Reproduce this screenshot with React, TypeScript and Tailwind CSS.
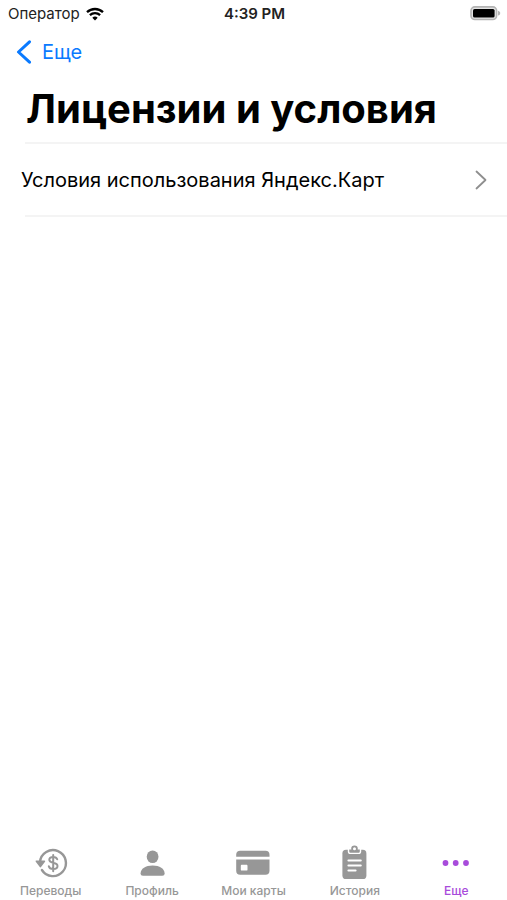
import React from 'react';

const TransfersIcon = () => (
  <svg viewBox="0 0 36 36" className="h-9 w-9" fill="none" aria-hidden="true">
    <path d="M7 17A13 13 0 1 1 8.9 25" stroke="currentColor" strokeWidth="2.4" strokeLinecap="round" />
    <path d="M3.4 16.2h8L7.4 21.6z" fill="currentColor" stroke="currentColor" strokeWidth="1.6" strokeLinejoin="round" />
    <path
      d="M24.2 14.3c-.5-1.500-2-2.300-4-2.300-2.300 0-3.900 1.100-3.900 2.800 0 1.900 1.900 2.500 3.900 3 2.300.5 4.300 1.200 4.300 3.200 0 1.900-1.800 3-4.200 3-2.400 0-4.100-1-4.500-2.800M20.200 10v16.200"
      stroke="currentColor"
      strokeWidth="2"
      strokeLinecap="round"
    />
  </svg>
);

const ProfileIcon = () => (
  <svg viewBox="0 0 36 36" className="h-9 w-9" fill="currentColor" aria-hidden="true">
    <ellipse cx="18.6" cy="11.7" rx="5.9" ry="6.3" />
    <path d="M6.6 28.2c0-4.600 5-7.800 12-7.800s12 3.200 12 7.800c0 1.700-.8 2.500-2.400 2.500H9c-1.600 0-2.400-.8-2.400-2.500z" />
  </svg>
);

const CardsIcon = () => (
  <svg viewBox="0 0 36 36" className="h-9 w-9" fill="currentColor" aria-hidden="true">
    <path d="M1.2 11.8V9.7c0-2.700 1.400-4 4-4h25.300c2.600 0 4 1.300 4 4v2.100z" />
    <path
      fillRule="evenodd"
      d="M1.2 14.400h33.300v11.300c0 2.700-1.400 4-4 4H5.200c-2.600 0-4-1.300-4-4zM7 19.800c-.8 0-1.200.4-1.200 1.200v3.400c0 .8.4 1.200 1.200 1.200h4.300c.8 0 1.200-.4 1.200-1.200V21c0-.8-.4-1.200-1.200-1.200z"
    />
  </svg>
);

const HistoryIcon = () => (
  <svg viewBox="0 0 36 36" className="h-9 w-9" fill="none" aria-hidden="true">
    <rect x="5.4" y="4.8" width="24" height="29.2" rx="3.6" fill="currentColor" />
    <path d="M10.8 4h13.400v2.400c0 1.700-.9 2.600-2.600 2.600h-8.200c-1.700 0-2.600-.9-2.600-2.600z" fill="white" />
    <path d="M12.2 4.400h10.600v1.800c0 1-.6 1.600-1.600 1.600h-7.400c-1 0-1.600-.6-1.600-1.600z" fill="currentColor" />
    <circle cx="17.5" cy="3.8" r="2.4" fill="white" stroke="currentColor" strokeWidth="1.8" />
    <path d="M11.4 15.400h12.400M11.400 20.400h12.400M11.400 25.600h7.200" stroke="white" strokeWidth="2" strokeLinecap="round" />
  </svg>
);

const MoreIcon = () => (
  <svg viewBox="0 0 36 36" className="h-9 w-9" fill="currentColor" aria-hidden="true">
    <circle cx="7.5" cy="18" r="2.9" />
    <circle cx="17.7" cy="18" r="2.9" />
    <circle cx="28" cy="18" r="2.9" />
  </svg>
);

const tabs = [
  { label: 'Переводы', icon: <TransfersIcon /> },
  { label: 'Профиль', icon: <ProfileIcon /> },
  { label: 'Мои карты', icon: <CardsIcon /> },
  { label: 'История', icon: <HistoryIcon /> },
  { label: 'Еще', icon: <MoreIcon />, active: true },
];

const StatusBar = () => (
  <div className="grid h-7 grid-cols-3 items-center pr-1.5 pl-2 text-[15px] text-[#222]">
    <div className="flex items-center gap-1.5">
      <span>Оператор</span>
      <svg viewBox="0 0 18 14" className="h-3.5 w-4.5" fill="none" stroke="black" aria-label="Wi-Fi">
        <path d="M1 5.2a11.600 11.600 0 0 1 16 0M3.900 8.200a7.400 7.400 0 0 1 10.200 0" strokeWidth="2.3" />
        <path d="M6.3 10.800a4 4 0 0 1 5.400 0L9 13.600z" fill="black" stroke="none" />
      </svg>
    </div>
    <time className="text-center font-semibold">4:39 PM</time>
    <svg viewBox="0 0 32 16" className="h-4 w-8 justify-self-end" aria-label="Battery">
      <rect x="2" y="0.9" width="25.6" height="12.6" rx="3.8" fill="#e4e4e4" stroke="#b4b4b4" strokeWidth="1.6" />
      <rect x="4" y="2.9" width="21.6" height="8.6" rx="1.6" fill="black" />
      <path d="M29 4.800c1.500.4 2.200 1.300 2.200 2.400s-.7 2-2.200 2.400z" fill="#b4b4b4" />
    </svg>
  </div>
);

export default function App() {
  return (
    <div className="flex min-h-screen flex-col bg-white font-['Inter','Liberation_Sans',sans-serif] text-black">
      <StatusBar />

      <header>
        <nav className="flex h-12 items-center px-4">
          <a href="#more" className="flex items-center gap-2.5 text-xl text-[#0a7aff]">
            <svg viewBox="0 0 16 24" className="h-6 w-4" fill="none" stroke="currentColor" aria-hidden="true">
              <path d="M13.5 1.800 2.500 12l11 10.200" strokeWidth="3" strokeLinecap="round" strokeLinejoin="round" />
            </svg>
            Еще
          </a>
        </nav>
        <h1 className="px-6.5 pt-2 pb-2 text-[40px] leading-[50px] font-bold">Лицензии и условия</h1>
      </header>

      <main className="flex-1">
        <ul className="ml-[25px] border-y-2 border-[#f4f4f4]">
          <li>
            <a href="#yandex-maps" className="-ml-1 flex h-[71px] items-center justify-between pr-5 text-xl">
              Условия использования Яндекс.Карт
              <svg viewBox="0 0 12 20" className="h-5 w-3" fill="none" stroke="#8e8e8e" aria-hidden="true">
                <path d="M1.5 1.500 10.500 10l-9 8.500" strokeWidth="1.8" strokeLinecap="round" strokeLinejoin="round" />
              </svg>
            </a>
          </li>
        </ul>
      </main>

      <nav className="grid grid-cols-5">
        {tabs.map((tab) => (
          <button
            key={tab.label}
            type="button"
            aria-current={tab.active ? 'page' : undefined}
            className={`flex flex-col items-center gap-0.5 pb-px text-xs font-medium ${tab.active ? 'text-[#a84bdb]' : 'text-[#979797]'}`}
          >
            {tab.icon}
            {tab.label}
          </button>
        ))}
      </nav>
    </div>
  );
}
